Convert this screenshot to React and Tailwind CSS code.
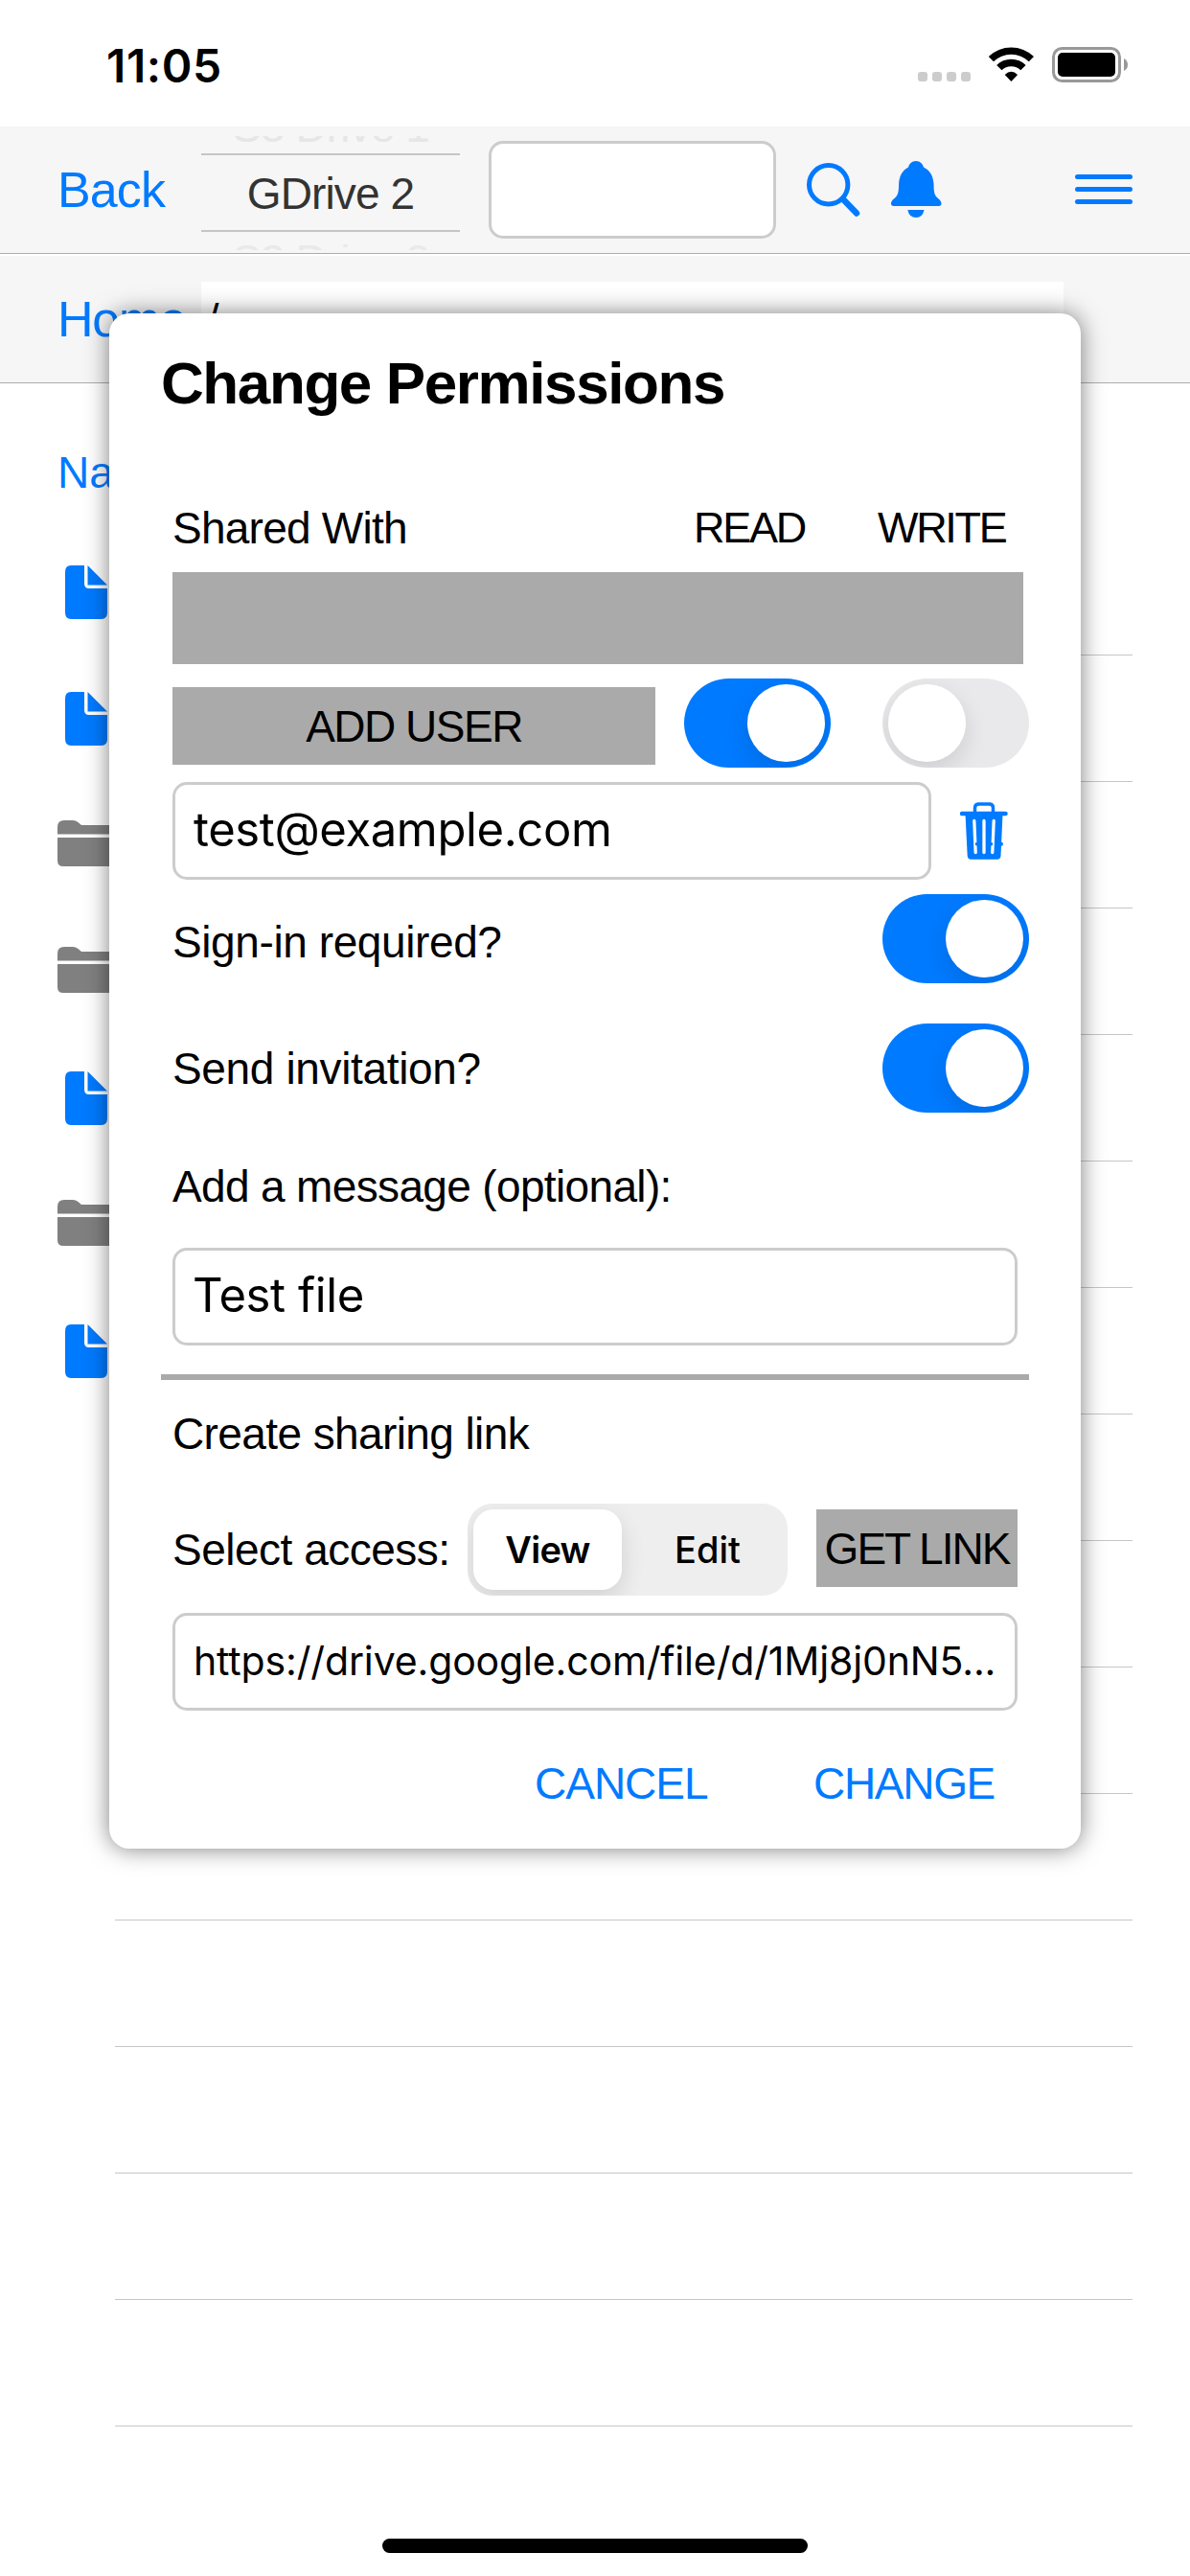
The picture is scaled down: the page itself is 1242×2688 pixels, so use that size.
import { useState } from 'react';

const ROWS = ['file', 'file', 'folder', 'folder', 'file', 'folder', 'file', '', '', '', '', '', '', '', ''];

const FileIcon = () => (
  <svg className="ml-[68px] mt-[38px] h-14 w-11" viewBox="0 0 44 56" fill="#007aff">
    <path d="M6 0H20V19Q20 24 25 24H44V49Q44 56 38 56H6Q0 56 0 49V7Q0 0 6 0Z" />
    <path d="M23.5 0L44 20.5H23.5Z" />
  </svg>
);

const FolderIcon = () => (
  <svg className="ml-[60px] mt-[40px] h-12 w-[60px]" viewBox="0 0 60 48" fill="#808080">
    <path d="M0 14.5V7Q0 0 7 0H16Q19 0 21.5 2L25 5H54Q60 5 60 11V14.5Z" />
    <path d="M0 18H60V42Q60 48 54 48H6Q0 48 0 42Z" />
  </svg>
);

const SearchIcon = () => (
  <svg className="h-14 w-14" viewBox="0 0 56 56" fill="none" stroke="#007aff">
    <circle cx="22.7" cy="22.7" r="20.2" strokeWidth="5" />
    <path d="M38 38L52 52.5" strokeWidth="6.5" strokeLinecap="round" />
  </svg>
);

const BellIcon = () => (
  <svg className="-mt-[2px] h-[59px] w-[53px]" viewBox="0 0 53 59" fill="#007aff">
    <path d="M26 0C30.5 0 33 3 34 6.500C41 10 44 16 44.5 24C44.6 31 45 35 47.5 37.5C50 40 52.5 41.5 52.5 44.5C52.5 46 51.5 47 50 47H2.5C1 47 0 46 0 44.5C0 41.5 2.5 40 5 37.5C7.500 35 8 31 8.100 24C8.500 16 11.500 10 18 6.500C19 3 21.5 0 26 0Z" />
    <path d="M17.3 51H34.500Q33 59 26 59Q19 59 17.300 51Z" />
  </svg>
);

const MenuIcon = () => (
  <svg className="-mt-[2px] h-[31px] w-[60px]" viewBox="0 0 60 31" stroke="#007aff" strokeWidth="5" strokeLinecap="round">
    <path d="M2.500 2.500H57.500M2.500 15.500H57.500M2.500 28.500H57.500" />
  </svg>
);

const TrashIcon = () => (
  <svg className="h-[60px] w-[50px]" viewBox="0 0 50 60" fill="none">
    <path d="M15.500 10V6Q15.500 2 19.500 2H30.500Q34.500 2 34.500 6V10" stroke="#007aff" strokeWidth="3.5" />
    <path d="M2 12H47.500" stroke="#007aff" strokeWidth="4.5" strokeLinecap="round" />
    <path d="M5.500 12H44.500L42.500 56Q42.300 59.700 38.500 59.700H11.500Q7.900 59.700 7.700 56Z" fill="#007aff" />
    <path d="M14.800 19.500L16.200 52.500M25 19.500V52.500M35.200 19.500L33.800 52.500" stroke="#fff" strokeWidth="3.3" strokeLinecap="round" />
    <g fill="#007aff">
      <circle cx="17.5" cy="43.7" r="1.8" />
      <circle cx="32.5" cy="43.7" r="1.8" />
      <circle cx="43" cy="43.7" r="2" />
    </g>
  </svg>
);

const StatusBar = () => (
  <div className="flex h-[132px] justify-between pl-[111px] pr-[65px]">
    <span className="mt-[40px] font-['Inter',sans-serif] text-[48px] font-semibold leading-[57px] tracking-[0.6px]">
      11:05
    </span>
    <svg className="mt-[49px] h-[37px] w-[219px]" viewBox="0 0 219 37">
      <g fill="#ccc">
        <rect x="0" y="26" width="10" height="10" rx="3" />
        <rect x="15" y="26" width="10" height="10" rx="3" />
        <rect x="30" y="26" width="10" height="10" rx="3" />
        <rect x="45" y="26" width="10" height="10" rx="3" />
      </g>
      <path d="M73.800 10A34 34 0 0 1 121 10L115.800 15.200A26.500 26.500 0 0 0 79 15.200Z" />
      <path d="M82.200 19A21.500 21.500 0 0 1 112.600 19L107.300 24.300A14 14 0 0 0 87.500 24.300Z" />
      <path d="M90.700 29Q97.400 22.500 104.100 29L97.400 36Z" />
      <rect x="141.5" y="1.5" width="69" height="34" rx="9" fill="none" stroke="#999" strokeWidth="3" />
      <rect x="146" y="6" width="60" height="25" rx="5" />
      <path d="M215 12Q219 14 219 18.500Q219 23 215 25Z" fill="#999" />
    </svg>
  </div>
);

// Wheel picker: the neighbouring drives only peek in above and below the selected one
const DrivePicker = () => (
  <div className="mt-[6px] flex h-[126px] w-[270px] flex-col items-center text-[46px] tracking-[-0.9px]">
    <div className="mt-[4px] flex h-[7px] items-end overflow-hidden text-[#e6e6e6]">
      <span className="-mb-[9px] leading-[52px]">S3 Drive 1</span>
    </div>
    <div className="mt-[11px] flex h-[82px] w-full items-center justify-center border-y-2 border-[#c5c5c5] pt-[3px] text-[#333]">
      GDrive 2
    </div>
    <div className="mt-[13px] h-[6px] overflow-hidden text-[#e9e9e9]">
      <span className="-mt-[8px] block leading-[50px]">S3 Drive 2</span>
    </div>
  </div>
);

const Toolbar = () => (
  <div className="flex h-[133px] items-center border-b border-[#adadad] bg-[#f6f6f6]">
    <button type="button" className="ml-[60px] w-[150px] text-left text-[52px] tracking-[-0.9px] text-[#007aff]">
      Back
    </button>
    <DrivePicker />
    <div className="ml-[30px] h-[102px] w-[300px] rounded-[15px] border-[3px] border-[#ccc] bg-white" />
    <div className="ml-[32px] flex items-center gap-8">
      <SearchIcon />
      <BellIcon />
    </div>
    <div className="ml-auto mr-[60px]">
      <MenuIcon />
    </div>
  </div>
);

const Breadcrumb = () => (
  <div className="mt-[2px] flex h-[133px] items-center border-b border-[#adadad] bg-[#f6f6f6]">
    <span className="ml-[60px] w-[150px] text-[52px] tracking-[-1.2px] text-[#007aff]">Home</span>
    <div className="flex h-[78px] w-[900px] items-center bg-white pl-[6px] text-[45px]">/</div>
  </div>
);

const FileList = () => (
  <div>
    <div className="h-[152px] pl-[60px] pt-[66px] text-[46px] leading-[54px] text-[#007aff]">Name</div>
    {ROWS.map((kind, i) => (
      <div key={i} className="flex h-[132px] flex-col">
        <div className="flex-1">
          {kind === 'file' && <FileIcon />}
          {kind === 'folder' && <FolderIcon />}
        </div>
        <div className="ml-[120px] mr-[60px] h-px bg-[#c6c6c8]" />
      </div>
    ))}
  </div>
);

const Toggle = ({ on, onChange }) => (
  <button
    type="button"
    onClick={() => onChange(!on)}
    className={`flex h-[93px] w-[153px] shrink-0 items-center overflow-hidden rounded-full px-[6px] ${
      on ? 'justify-end bg-[#007aff]' : 'justify-start bg-[#e9e9eb]'
    }`}
  >
    <span className="h-[81px] w-[81px] rounded-full bg-white shadow-[0_9px_24px_rgba(0,0,0,0.12)]" />
  </button>
);

const PermissionsDialog = () => {
  const [read, setRead] = useState(true);
  const [write, setWrite] = useState(false);
  const [signIn, setSignIn] = useState(true);
  const [invite, setInvite] = useState(true);
  const [access, setAccess] = useState('View');

  return (
    <div className="absolute left-[114px] top-[327px] h-[1602px] w-[1014px] rounded-[21px] bg-white pl-[66px] pr-[54px] pt-[37px] text-[46px] leading-[54px] shadow-[0_0_24px_rgba(0,0,0,0.5)]">
      <h1 className="-ml-[12px] text-[62px] font-bold leading-[72px] tracking-[-1.4px]">Change Permissions</h1>

      <div className="mt-[88px] flex">
        <span className="w-[544px] tracking-[-0.75px]">Shared With</span>
        <span className="w-[192px] text-[45px] tracking-[-2.3px]">READ</span>
        <span className="text-[45px] tracking-[-2.3px]">WRITE</span>
      </div>
      <div className="mt-[19px] h-[96px] w-[888px] bg-[#aaa]" />

      {/* New user */}
      <div className="mt-[15px] flex h-[93px]">
        <button type="button" className="mr-[30px] mt-[9px] h-[81px] w-[504px] bg-[#aaa] tracking-[-1.5px]">
          ADD USER
        </button>
        <Toggle on={read} onChange={setRead} />
        <div className="w-[54px]" />
        <Toggle on={write} onChange={setWrite} />
      </div>
      <div className="mt-[15px] flex items-center">
        <div className="flex h-[102px] w-[792px] items-center rounded-[15px] border-[3px] border-[#ccc] pb-[3px] pl-[19px] font-['Inter',sans-serif] text-[49px] tracking-[-0.4px]">
          test@example.com
        </div>
        <button type="button" className="ml-[30px]">
          <TrashIcon />
        </button>
      </div>
      <div className="mt-[15px] flex items-center justify-between">
        <span className="mt-[6px] tracking-[-0.4px]">Sign-in required?</span>
        <Toggle on={signIn} onChange={setSignIn} />
      </div>
      <div className="mt-[42px] flex items-center justify-between">
        <span className="tracking-[-0.35px]">Send invitation?</span>
        <Toggle on={invite} onChange={setInvite} />
      </div>
      <div className="mt-[50px] tracking-[-0.65px]">Add a message (optional):</div>
      <div className="mt-[37px] flex h-[102px] w-[882px] items-center rounded-[15px] border-[3px] border-[#ccc] pb-[3px] pl-[18px] font-['Inter',sans-serif] text-[49px] tracking-[-0.4px]">
        Test file
      </div>

      <div className="-ml-[12px] mt-[30px] h-[6px] bg-[#aaa]" />

      {/* Sharing link */}
      <div className="mt-[29px] tracking-[-0.6px]">Create sharing link</div>
      <div className="mt-[46px] flex h-[96px] items-center">
        <span className="w-[308px] tracking-[-0.5px]">Select access:</span>
        <div className="flex h-[96px] w-[334px] overflow-hidden rounded-[26px] bg-[#eee] p-[6px] font-['Inter',sans-serif] text-[38px]">
          {['View', 'Edit'].map((label) => (
            <button
              key={label}
              type="button"
              onClick={() => setAccess(label)}
              className={`flex-1 rounded-[21px] ${
                access === label
                  ? 'mr-[12px] bg-white font-semibold tracking-[-0.7px] shadow-[0_9px_24px_rgba(0,0,0,0.12)]'
                  : 'font-medium'
              }`}
            >
              {label}
            </button>
          ))}
        </div>
        <button type="button" className="-mt-[3px] ml-[30px] h-[81px] w-[210px] bg-[#aaa] tracking-[-2px]">
          GET LINK
        </button>
      </div>
      <div className="mt-[18px] flex h-[102px] w-[882px] items-center rounded-[15px] border-[3px] border-[#ccc] pb-[3px] pl-[19px] font-['Inter',sans-serif] text-[41px] tracking-[-0.15px]">
        https://drive.google.com/file/d/1Mj8j0nN5...
      </div>

      <div className="mt-[49px] flex text-[#007aff]">
        <button type="button" className="ml-[378px] w-[291px] text-left tracking-[-1px]">
          CANCEL
        </button>
        <button type="button" className="tracking-[-1.3px]">
          CHANGE
        </button>
      </div>
    </div>
  );
};

export default function App() {
  return (
    <div className="relative h-[2688px] w-[1242px] overflow-hidden bg-white font-['Liberation_Sans',Arial,sans-serif] text-black">
      <StatusBar />
      <Toolbar />
      <Breadcrumb />
      <FileList />
      <div className="mx-auto mt-[117px] h-[15px] w-[444px] rounded-full bg-black" />
      <PermissionsDialog />
    </div>
  );
}
